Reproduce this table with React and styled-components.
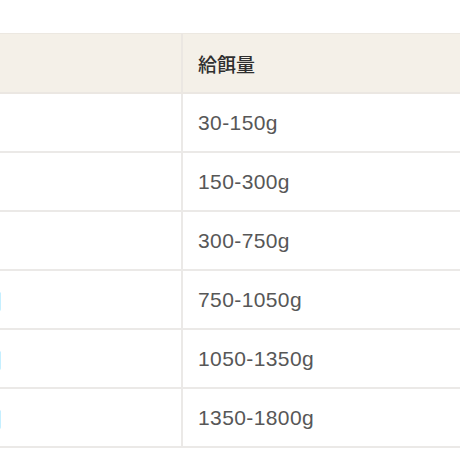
import React from 'react';
import styled, { createGlobalStyle } from 'styled-components';

const GlobalStyle = createGlobalStyle`
  html, body {
    margin: 0;
    padding: 0;
    background: #fff;
  }
  body {
    font-family: "Liberation Sans", "Noto Sans CJK JP", sans-serif;
  }
`;

const Viewport = styled.div`
  width: 460px;
  height: 460px;
  overflow: hidden;
  padding-top: 33px;
  box-sizing: border-box;
`;

const Table = styled.table`
  border-collapse: collapse;
  margin-left: -142px;
  width: 602px;
  table-layout: fixed;

  col.age {
    width: 324px;
  }
`;

const HeadCell = styled.th`
  background: #f4f0e8;
  border-top: 1px solid #ece8e1;
  border-bottom: 2px solid #ebe7e2;
  border-right: ${p => (p.$last ? 'none' : '2px solid #ebe7e2')};
  height: 58px;
  padding: 0 15px;
  text-align: left;
  font-family: "Noto Sans CJK JP", sans-serif;
  font-size: 19px;
  font-weight: 500;
  color: #2f2f2f;
  white-space: nowrap;
`;

const Cell = styled.td`
  border-bottom: 2px solid #ebe9e7;
  border-right: ${p => (p.$last ? 'none' : '2px solid #ebe9e7')};
  height: 57px;
  padding: 0 15px;
  font-size: 21px;
  color: #575757;
  white-space: nowrap;
  letter-spacing: 0.4px;
`;

const rows = [
  { age: '生後1ヶ月', amount: '30-150g' },
  { age: '生後2ヶ月', amount: '150-300g' },
  { age: '生後3ヶ月', amount: '300-750g' },
  { age: '生後4〜5ヶ月', amount: '750-1050g' },
  { age: '生後6〜7ヶ月', amount: '1050-1350g' },
  { age: '生後8〜9ヶ月', amount: '1350-1800g' },
];

export default function App() {
  return (
    <>
      <GlobalStyle />
      <Viewport>
        <Table>
          <colgroup>
            <col className="age" />
            <col />
          </colgroup>
          <thead>
            <tr>
              <HeadCell>月齢</HeadCell>
              <HeadCell $last>給餌量</HeadCell>
            </tr>
          </thead>
          <tbody>
            {rows.map(r => (
              <tr key={r.amount}>
                <Cell>{r.age}</Cell>
                <Cell $last>{r.amount}</Cell>
              </tr>
            ))}
          </tbody>
        </Table>
      </Viewport>
    </>
  );
}
